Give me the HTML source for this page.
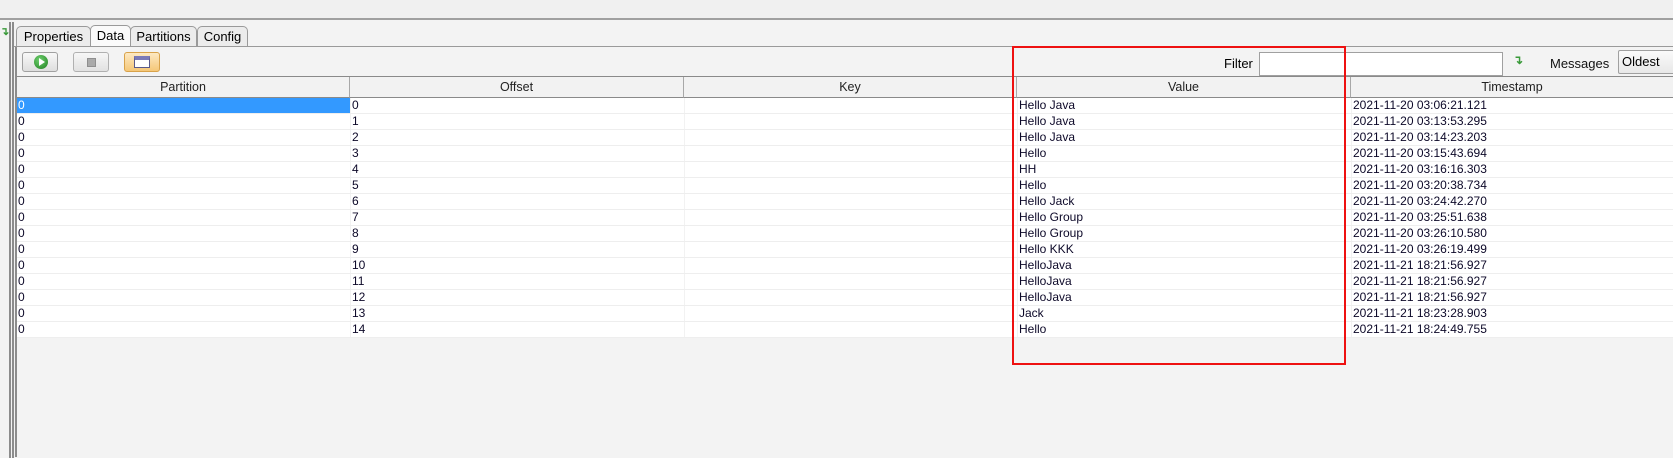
<!DOCTYPE html>
<html><head><meta charset="utf-8"><style>
*{margin:0;padding:0;box-sizing:border-box}
body{width:1673px;height:457px;background:#f3f3f3;position:relative;overflow:hidden;font-family:"Liberation Sans",Arial,sans-serif;font-size:12px;color:#000}
.a{position:absolute}
.tab{position:absolute;top:26px;height:21px;border:1px solid #9a9a9a;border-bottom:none;border-radius:5px 5px 0 0;background:#ececec;font-size:13px;line-height:19px;text-align:center}
.btn{position:absolute;top:52px;width:36px;height:20px;border:1px solid #a0a0a0;border-radius:3px;background:linear-gradient(#f8f8f8,#dedede)}
.hd{position:absolute;top:77px;height:21px;background:#f2f2f2;border-right:1px solid #a8a8a8;border-bottom:1px solid #8a8a8a;text-align:center;line-height:20px;font-size:12.5px;color:#222}
.row{position:absolute;left:17px;width:1656px;height:16px;background:#fff;border-bottom:1px solid #eeeeee;font-size:12px;line-height:15px;color:#0c0828}
.row span{position:absolute;top:0;height:15px;padding-left:1px}
.c1{left:0;width:333px}.c2{left:333px;width:334px;border-left:1px solid #f2f2f2}.c3{left:667px;width:333px;border-left:1px solid #f2f2f2}.c4{left:1000px;width:334px;border-left:1px solid #f2f2f2}.c5{left:1334px;width:322px;border-left:1px solid #f2f2f2}
</style></head><body>
<div class="a" style="left:0;top:0;width:1673px;height:20px;background:#f0f0f0;border-bottom:2px solid #a0a0a0"></div>
<div class="a" style="left:9px;top:22px;width:2px;height:436px;background:#8c8c8c"></div>
<div class="a" style="left:12px;top:22px;width:2px;height:436px;background:#8c8c8c"></div>
<div class="a" style="left:15px;top:46px;width:2px;height:411px;background:#8c8c8c"></div>
<div class="a" style="left:0;top:25px;color:#3a9a3a;font-size:11px;font-weight:bold">↴</div>
<div class="tab" style="left:16px;width:75px">Properties</div>
<div class="tab" style="left:130px;width:67px">Partitions</div>
<div class="tab" style="left:197px;width:51px">Config</div>
<div class="tab" style="left:90px;width:41px;top:25px;height:22px;background:#fafafa">Data</div>
<div class="a" style="left:14px;top:46px;width:1659px;height:1px;background:#9a9a9a"></div>
<div class="btn" style="left:22px"><div class="a" style="left:11px;top:2px;width:14px;height:14px;border-radius:50%;background:radial-gradient(circle at 40% 35%,#6fd06f,#1f7f1f)"></div><div class="a" style="left:16px;top:5px;width:0;height:0;border-left:6px solid #fff;border-top:4px solid transparent;border-bottom:4px solid transparent"></div></div>
<div class="btn" style="left:73px;opacity:.8"><div class="a" style="left:13px;top:5px;width:9px;height:9px;background:#999;border:1px solid #777"></div></div>
<div class="btn" style="left:124px;border-color:#d8a24a;background:linear-gradient(#fde9c2,#f5c778)"><div class="a" style="left:9px;top:3px;width:16px;height:12px;background:#fff;border:1px solid #5a5a8a;border-top:4px solid #7a7ab8"></div></div>
<div class="a" style="left:1224px;top:56px;font-size:13px">Filter</div>
<div class="a" style="left:1259px;top:52px;width:244px;height:24px;background:#fff;border:1px solid #a0a0a0"></div>
<div class="a" style="left:1513px;top:53px;color:#3a9a3a;font-size:12px;font-weight:bold">↴</div>
<div class="a" style="left:1550px;top:56px;font-size:13px;color:#111">Messages</div>
<div class="a" style="left:1618px;top:50px;width:60px;height:24px;background:linear-gradient(#fafafa,#e8e8e8);border:1px solid #a0a0a0;border-radius:2px;font-size:13px;line-height:22px;padding-left:3px">Oldest</div>
<div class="a" style="left:17px;top:76px;width:1656px;height:1px;background:#8a8a8a"></div>
<div class="hd" style="left:17px;width:333px">Partition</div>
<div class="hd" style="left:350px;width:334px">Offset</div>
<div class="hd" style="left:684px;width:333px">Key</div>
<div class="hd" style="left:1017px;width:334px">Value</div>
<div class="hd" style="left:1351px;width:322px;border-right:none">Timestamp</div>
<div class="row" style="top:98px"><span class="c1" style="background:#3399ff;color:#fff">0</span><span class="c2">0</span><span class="c3"></span><span class="c4">Hello Java</span><span class="c5">2021-11-20 03:06:21.121</span></div>
<div class="row" style="top:114px"><span class="c1">0</span><span class="c2">1</span><span class="c3"></span><span class="c4">Hello Java</span><span class="c5">2021-11-20 03:13:53.295</span></div>
<div class="row" style="top:130px"><span class="c1">0</span><span class="c2">2</span><span class="c3"></span><span class="c4">Hello Java</span><span class="c5">2021-11-20 03:14:23.203</span></div>
<div class="row" style="top:146px"><span class="c1">0</span><span class="c2">3</span><span class="c3"></span><span class="c4">Hello</span><span class="c5">2021-11-20 03:15:43.694</span></div>
<div class="row" style="top:162px"><span class="c1">0</span><span class="c2">4</span><span class="c3"></span><span class="c4">HH</span><span class="c5">2021-11-20 03:16:16.303</span></div>
<div class="row" style="top:178px"><span class="c1">0</span><span class="c2">5</span><span class="c3"></span><span class="c4">Hello</span><span class="c5">2021-11-20 03:20:38.734</span></div>
<div class="row" style="top:194px"><span class="c1">0</span><span class="c2">6</span><span class="c3"></span><span class="c4">Hello Jack</span><span class="c5">2021-11-20 03:24:42.270</span></div>
<div class="row" style="top:210px"><span class="c1">0</span><span class="c2">7</span><span class="c3"></span><span class="c4">Hello Group</span><span class="c5">2021-11-20 03:25:51.638</span></div>
<div class="row" style="top:226px"><span class="c1">0</span><span class="c2">8</span><span class="c3"></span><span class="c4">Hello Group</span><span class="c5">2021-11-20 03:26:10.580</span></div>
<div class="row" style="top:242px"><span class="c1">0</span><span class="c2">9</span><span class="c3"></span><span class="c4">Hello KKK</span><span class="c5">2021-11-20 03:26:19.499</span></div>
<div class="row" style="top:258px"><span class="c1">0</span><span class="c2">10</span><span class="c3"></span><span class="c4">HelloJava</span><span class="c5">2021-11-21 18:21:56.927</span></div>
<div class="row" style="top:274px"><span class="c1">0</span><span class="c2">11</span><span class="c3"></span><span class="c4">HelloJava</span><span class="c5">2021-11-21 18:21:56.927</span></div>
<div class="row" style="top:290px"><span class="c1">0</span><span class="c2">12</span><span class="c3"></span><span class="c4">HelloJava</span><span class="c5">2021-11-21 18:21:56.927</span></div>
<div class="row" style="top:306px"><span class="c1">0</span><span class="c2">13</span><span class="c3"></span><span class="c4">Jack</span><span class="c5">2021-11-21 18:23:28.903</span></div>
<div class="row" style="top:322px"><span class="c1">0</span><span class="c2">14</span><span class="c3"></span><span class="c4">Hello</span><span class="c5">2021-11-21 18:24:49.755</span></div>
<div class="a" style="left:1012px;top:46px;width:334px;height:319px;border:2px solid #ee1111"></div>
</body></html>
